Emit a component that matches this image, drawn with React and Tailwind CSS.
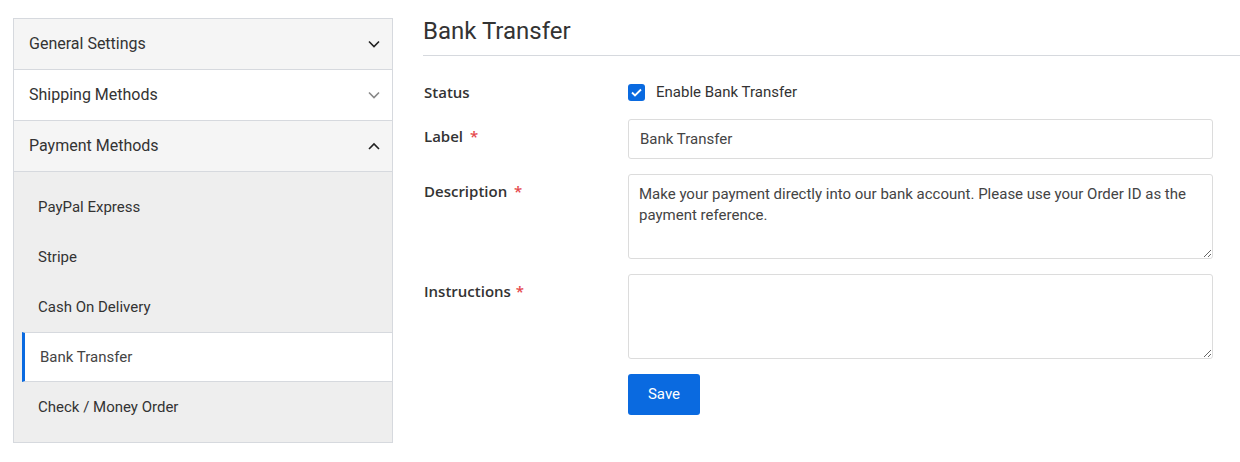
import React, { useState } from 'react';

const Chevron = ({ up, light }) => (
    <svg width="12" height="8" viewBox="0 0 12 8" fill="none" className={light ? 'text-[#888]' : 'text-[#222]'}>
        <path d={up ? 'M1 7L6 2L11 7' : 'M1 1.5L6 6.5L11 1.5'} stroke="currentColor" strokeWidth="1.6" />
    </svg>
);

const subItems = ['PayPal Express', 'Stripe', 'Cash On Delivery', 'Bank Transfer', 'Check / Money Order'];

const App = () => {
    const [active, setActive] = useState('Bank Transfer');

    return (
        <div className="flex w-[1240px] h-[462px] bg-white text-[#333] font-['Roboto',sans-serif]">
            {/* Sidebar */}
            <div className="ml-[13px] mt-[18px] w-[380px] self-start border border-[#d6d9de]">
                <div className="h-[51px] flex items-center justify-between pl-[15px] pr-[12px] bg-[#f5f5f5] border-b border-[#d6d9de] text-[16px]">
                    <span>General Settings</span>
                    <Chevron />
                </div>
                <div className="h-[51px] flex items-center justify-between pl-[15px] pr-[12px] bg-white border-b border-[#d6d9de] text-[16px]">
                    <span>Shipping Methods</span>
                    <Chevron light />
                </div>
                <div className="h-[51px] flex items-center justify-between pl-[15px] pr-[12px] bg-[#f5f5f5] border-b border-[#d6d9de] text-[16px]">
                    <span>Payment Methods</span>
                    <Chevron up />
                </div>
                <div className="bg-[#eeeeee] pt-[10px] pb-[10px]">
                    {subItems.map((item) =>
                        item === active ? (
                            <div
                                key={item}
                                className="ml-[8px] h-[50px] flex items-center pl-[15px] bg-white border-l-[3px] border-[#0a6ae0] border-y border-y-[#d6d9de] text-[15px] text-[#444]"
                            >
                                {item}
                            </div>
                        ) : (
                            <div
                                key={item}
                                onClick={() => setActive(item)}
                                className="h-[50px] flex items-center pl-[24px] text-[15px] text-[#333] cursor-pointer"
                            >
                                {item}
                            </div>
                        )
                    )}
                </div>
            </div>

            {/* Content */}
            <div className="ml-[30px] flex-1">
                <div className="pt-[17px] pb-[10px] border-b border-[#d6d9de]">
                    <h2 className="text-[24px] leading-[28px] text-[#333]">Bank Transfer</h2>
                </div>

                <div className="pl-[1px] pr-[27px] pt-[26px] text-[15px] font-['Open_Sans',sans-serif]">
                    <div className="flex items-center h-[20px]">
                        <div className="w-[204px] font-semibold text-[#333]">Status</div>
                        <label className="flex items-center gap-[11px] font-['Roboto',sans-serif] text-[15px] text-[#333] mt-[1px]">
                            <span className="w-[17px] h-[17px] rounded-[3px] bg-[#0a6ae0] flex items-center justify-center">
                                <svg width="11" height="9" viewBox="0 0 11 9" fill="none">
                                    <path d="M1 4.5L4 7.5L10 1.5" stroke="white" strokeWidth="1.8" />
                                </svg>
                            </span>
                            Enable Bank Transfer
                        </label>
                    </div>

                    <div className="flex mt-[17px]">
                        <div className="w-[204px] pt-[6px] font-semibold text-[#333]">
                            Label <span className="text-[#e5484d] ml-[3px]">*</span>
                        </div>
                        <input
                            defaultValue="Bank Transfer"
                            className="flex-1 h-[40px] px-[11px] border border-[#dcdcdc] rounded-[3px] font-['Roboto',sans-serif] text-[15px] text-[#444] outline-none"
                        />
                    </div>

                    <div className="flex mt-[15px]">
                        <div className="w-[204px] pt-[6px] font-semibold text-[#333]">
                            Description <span className="text-[#e5484d] ml-[3px]">*</span>
                        </div>
                        <textarea
                            defaultValue="Make your payment directly into our bank account. Please use your Order ID as the payment reference."
                            className="flex-1 h-[85px] px-[10px] py-[9px] border border-[#dcdcdc] rounded-[3px] font-['Roboto',sans-serif] text-[15px] leading-[21px] text-[#444] outline-none"
                        />
                    </div>

                    <div className="flex mt-[15px]">
                        <div className="w-[204px] pt-[6px] font-semibold text-[#333]">
                            Instructions <span className="text-[#e5484d] ml-[1px]">*</span>
                        </div>
                        <textarea className="flex-1 h-[85px] px-[10px] py-[9px] border border-[#dcdcdc] rounded-[3px] font-['Roboto',sans-serif] text-[15px] text-[#444] outline-none" />
                    </div>

                    <div className="flex mt-[15px]">
                        <div className="w-[204px]" />
                        <button className="w-[72px] h-[41px] rounded-[3px] bg-[#0a6ae0] text-white font-['Roboto',sans-serif] text-[15px]">
                            Save
                        </button>
                    </div>
                </div>
            </div>
        </div>
    );
};

export default App;
